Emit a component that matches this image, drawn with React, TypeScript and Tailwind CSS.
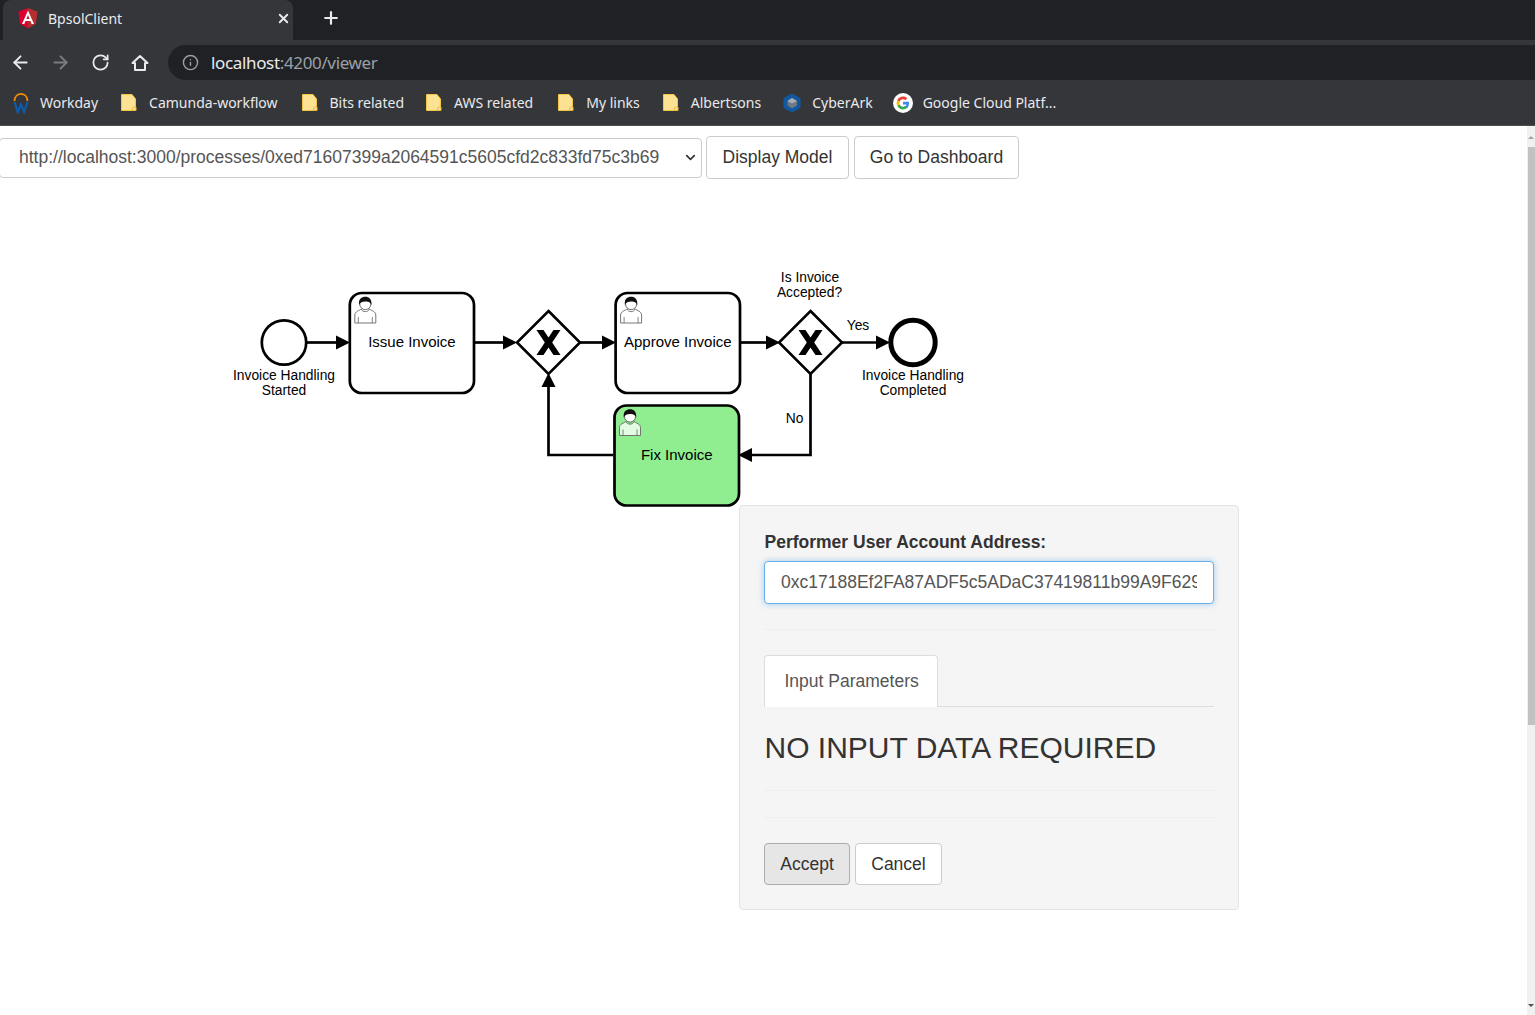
import { ArrowLeft, ArrowRight, ChevronDown, Info, Plus, RotateCw, X } from 'lucide-react';

const pageFont = "font-['Liberation_Sans',Arial,sans-serif]";

function AngularLogo() {
  return (
    <svg width="20" height="21" viewBox="0 0 20 21" className="shrink-0">
      <path d="M10 0 L19.5 3.4 L18 15.8 L10 20.5 Z" fill="#b52e31" />
      <path d="M10 0 L0.5 3.4 L2 15.8 L10 20.5 Z" fill="#dd0031" />
      <path d="M10 2.6 L4 16 H6.3 L7.5 13 H12.5 L13.7 16 H16 Z M8.4 11 L10 7 L11.6 11 Z" fill="#fff" fillRule="evenodd" />
    </svg>
  );
}

function WorkdayIcon() {
  return (
    <svg width="16" height="22" viewBox="0 0 16 22" className="shrink-0">
      <path d="M1.5 9 C2 -0.5 14 -0.5 14.5 9" fill="none" stroke="#f38b00" strokeWidth="1.8" />
      <path d="M1.5 10 L4.8 20 L8 12.5 L11.2 20 L14.5 10" fill="none" stroke="#0b5cad" strokeWidth="2.2" />
    </svg>
  );
}

function FolderIcon() {
  return (
    <svg width="16" height="19" viewBox="0 0 16 19" className="shrink-0">
      <path d="M0.5 1.5 H11 L14.5 6 V17.5 H0.5 Z" fill="#fde293" stroke="#f5c645" />
      <path d="M12.5 14 H15 V17.5 H11.5 V15 Z" fill="#fde293" stroke="#e8b93c" />
    </svg>
  );
}

function CyberArkIcon() {
  return (
    <svg width="18" height="20" viewBox="0 0 18 20" className="shrink-0">
      <path d="M9 0.5 L17.5 5 V15 L9 19.5 L0.5 15 V5 Z" fill="#11589e" />
      <path d="M9 5 L14 8 V12.5 L9 15.5 L4.5 12.5 V8 Z" fill="#6d7a86" />
      <path d="M9 5 L14 8 L9 10.5 L4.5 8 Z" fill="#a7adb3" />
    </svg>
  );
}

function GoogleIcon() {
  return (
    <svg width="20" height="20" viewBox="0 0 20 20" className="shrink-0">
      <circle cx="10" cy="10" r="10" fill="#fff" />
      <path d="M16 10.2 c0 -.5 0 -1 -.1 -1.4 H10 v2.7 h3.4 c-.2 .9 -.7 1.6 -1.4 2 l2.2 1.7 c1.1 -1.1 1.8 -2.9 1.8 -5 z" fill="#4285f4" />
      <path d="M10 16.4 c1.7 0 3.1 -.6 4.2 -1.6 L12 13.1 c-.5 .4 -1.2 .6 -2 .6 -1.6 0 -2.9 -1 -3.4 -2.4 L4.3 13 c1.1 2 3.2 3.4 5.7 3.4 z" fill="#34a853" />
      <path d="M6.6 11.3 c-.3 -.8 -.3 -1.8 0 -2.6 L4.3 7 c-.9 1.8 -.9 4.2 0 6 z" fill="#fbbc05" />
      <path d="M10 6.3 c.9 0 1.7 .3 2.4 .9 l1.9 -1.9 C13.1 4.2 11.7 3.6 10 3.6 7.5 3.6 5.4 5 4.3 7 l2.3 1.7 C7.1 7.3 8.4 6.3 10 6.3 z" fill="#ea4335" />
    </svg>
  );
}

function Bookmark({ icon, label, className }: { icon: React.ReactNode; label: string; className: string }) {
  return (
    <div className={`flex items-center ${className}`}>
      {icon}
      <span className="text-[14px] text-[#e8eaed] whitespace-nowrap">{label}</span>
    </div>
  );
}

function BrowserChrome() {
  return (
    <header className="shrink-0 font-['Noto_Sans',sans-serif]">
      {/* tab strip */}
      <div className="flex h-10 items-center bg-[#202124] pl-[3px]">
        <div className="flex h-10 w-[290px] items-center rounded-t-lg bg-[#35363a] pb-[4px] pl-[15px] pr-[2px]">
          <AngularLogo />
          <span className="ml-[10px] flex-1 text-[14px] text-[#e8eaed]">BpsolClient</span>
          <X size={15} strokeWidth={3} className="text-[#e8eaed]" />
        </div>
        <Plus size={20} strokeWidth={2.6} className="mb-[4px] ml-[28px] text-[#e8eaed]" />
      </div>
      {/* toolbar */}
      <div className="flex h-10 items-end bg-[#35363a]">
        <div className="flex h-[35px] w-[168px] items-center pl-[10px]">
          <ArrowLeft size={21} strokeWidth={2.2} className="text-[#e8eaed]" />
          <ArrowRight size={21} strokeWidth={2.2} className="ml-[19px] text-[#7a7c80]" />
          <RotateCw size={19} strokeWidth={2.2} className="ml-[20px] text-[#e8eaed]" />
          <svg width="18" height="18" viewBox="0 0 18 18" className="ml-[21px]">
            <path d="M9 2 L1.5 9 H4 V16 H14 V9 H16.5 Z" fill="none" stroke="#e8eaed" strokeWidth="2" strokeLinejoin="round" />
          </svg>
        </div>
        <div className="flex h-[35px] flex-1 items-center rounded-l-full bg-[#202124] pl-[14px]">
          <Info size={17} strokeWidth={2} className="text-[#9aa0a6]" />
          <span className="ml-[12px] text-[17px] tracking-[-0.35px] text-[#e8eaed]">
            localhost<span className="text-[#9aa0a6]">:4200/viewer</span>
          </span>
        </div>
      </div>
      {/* bookmarks */}
      <div className="flex h-[46px] items-center border-b border-[#4d4e51] bg-[#35363a] pl-[13px]">
        <Bookmark className="gap-[11px]" icon={<WorkdayIcon />} label="Workday" />
        <Bookmark className="ml-[23px] gap-[12px]" icon={<FolderIcon />} label="Camunda-workflow" />
        <Bookmark className="ml-[24px] gap-[12px]" icon={<FolderIcon />} label="Bits related" />
        <Bookmark className="ml-[22px] gap-[12px]" icon={<FolderIcon />} label="AWS related" />
        <Bookmark className="ml-[25px] gap-[12px]" icon={<FolderIcon />} label="My links" />
        <Bookmark className="ml-[23px] gap-[12px]" icon={<FolderIcon />} label="Albertsons" />
        <Bookmark className="ml-[22px] gap-[11px]" icon={<CyberArkIcon />} label="CyberArk" />
        <Bookmark className="ml-[20px] gap-[10px]" icon={<GoogleIcon />} label="Google Cloud Platf..." />
      </div>
    </header>
  );
}

function UserIcon({ x, y }: { x: number; y: number }) {
  return (
    <g transform={`translate(${x} ${y})`}>
      <path
        d="M0.5 26 V18 C0.5 14.5 5 13.5 7 12 C8 15.5 14 15.5 15 12 C17 13.5 21.5 14.5 21.5 18 V26 Z"
        fill="#fff"
        fillOpacity="0.75"
        stroke="#666"
        strokeWidth="0.9"
      />
      <path d="M4 20 V26 M18 20 V26" stroke="#666" strokeWidth="0.8" />
      <circle cx="11" cy="7" r="5.6" fill="#fff" stroke="#444" strokeWidth="0.8" />
      <path d="M4.8 8 C4 1.5 7.5 -0.3 11 -0.3 C14.8 -0.3 17.6 2 17.2 8 C15.8 5 14 4.4 11 4.6 C8 4.6 6 5.2 4.8 8 Z" fill="#111" />
    </g>
  );
}

function Task({ x, y, w, h, label, active = false }: { x: number; y: number; w: number; h: number; label: string; active?: boolean }) {
  return (
    <g>
      <rect x={x} y={y} width={w} height={h} rx="12" fill={active ? '#90ee90' : '#fff'} stroke="#000" strokeWidth="2.7" />
      <UserIcon x={x + 4.5} y={y + 4} />
      <text x={x + w / 2} y={y + h / 2 + 4} textAnchor="middle" fontSize="15" fill="#000">{label}</text>
    </g>
  );
}

function Gateway({ cx, cy }: { cx: number; cy: number }) {
  return (
    <g transform={`translate(${cx} ${cy})`}>
      <path d="M0 -31.5 L31.5 0 L0 31.5 L-31.5 0 Z" fill="#fff" stroke="#000" strokeWidth="2.6" />
      <path d="M-12 -12.5 H-5 L0 -5 L5 -12.5 H12 L3.7 0 L12 12.5 H5 L0 5 L-5 12.5 H-12 L-3.7 0 Z" fill="#000" />
    </g>
  );
}

function Label({ x, y, children }: { x: number; y: number; children: string }) {
  return <text x={x} y={y} textAnchor="middle" fontSize="13.8" fill="#000">{children}</text>;
}

function ProcessDiagram() {
  return (
    <svg width="760" height="240" viewBox="225 265 760 240" className="ml-[225px] mt-[86px] block shrink-0 overflow-visible">
      <g fill="none" stroke="#000" strokeWidth="2.7">
        <path d="M307 342.5 H338" />
        <path d="M475 342.5 H505" />
        <path d="M580 342.5 H604" />
        <path d="M741 342.5 H768" />
        <path d="M842 342.5 H878" />
        <path d="M810.5 373 V455 H752" />
        <path d="M613 455 H548.5 V386" />
      </g>
      <g fill="#000">
        <path d="M350 342.5 L336 335.5 V349.5 Z" />
        <path d="M517 342.5 L503 335.5 V349.5 Z" />
        <path d="M616 342.5 L602 335.5 V349.5 Z" />
        <path d="M780 342.5 L766 335.5 V349.5 Z" />
        <path d="M890 342.5 L876 335.5 V349.5 Z" />
        <path d="M738 455 L752 448 V462 Z" />
        <path d="M548.5 373 L541.5 387 H555.5 Z" />
      </g>
      <circle cx="284" cy="342.5" r="22.2" fill="#fff" stroke="#000" strokeWidth="2.7" />
      <circle cx="913" cy="342.5" r="22.2" fill="#fff" stroke="#000" strokeWidth="5" />
      <Task x={349.8} y={293} w={124.2} h={100} label="Issue Invoice" />
      <Task x={615.6} y={293} w={124.4} h={100} label="Approve Invoice" />
      <Task x={614.5} y={405.5} w={124.5} h={100} label="Fix Invoice" active />
      <Gateway cx={548.5} cy={342.5} />
      <Gateway cx={810.5} cy={342.5} />
      <Label x={284} y={380}>Invoice Handling</Label>
      <Label x={284} y={395}>Started</Label>
      <Label x={810} y={282}>Is Invoice</Label>
      <Label x={809.5} y={297}>Accepted?</Label>
      <Label x={858} y={330}>Yes</Label>
      <Label x={794.5} y={423}>No</Label>
      <Label x={913} y={380}>Invoice Handling</Label>
      <Label x={913} y={395}>Completed</Label>
    </svg>
  );
}

function TaskPanel() {
  return (
    <section className="ml-[739px] w-[500px] shrink-0 rounded border border-[#e3e3e3] bg-[#f5f5f5] px-6 pt-[24px] pb-[24px]">
      <label className="ml-[0.5px] block text-[17.5px] font-bold leading-[24px] text-[#333]">Performer User Account Address:</label>
      <input
        readOnly
        defaultValue="0xc17188Ef2FA87ADF5c5ADaC37419811b99A9F6291d3c"
        className="mt-[7px] block h-[43px] w-full rounded-[4px] border border-[#66afe9] bg-white px-4 text-[17.5px] text-[#555] shadow-[0_0_6px_rgba(102,175,233,0.6)] outline-none"
      />
      <hr className="mt-[25px] border-[#eee]" />
      <div className="mt-[25px] border-b border-[#ddd]">
        <div className="-mb-px h-[52px] w-[174px] rounded-t-[4px] border border-b-0 border-[#ddd] bg-white pl-[19.5px] text-[17.5px] leading-[50px] text-[#555]">
          Input Parameters
        </div>
      </div>
      <h2 className="mt-[21px] ml-[0.5px] text-[30px] leading-[40px] font-normal text-[#333]">NO INPUT DATA REQUIRED</h2>
      <hr className="mt-[22px] border-[#eee]" />
      <hr className="mt-[26px] border-[#eee]" />
      <div className="mt-[25px] flex gap-[5px]">
        <button className="h-[42px] w-[86px] rounded-[4px] border border-[#adadad] bg-[#e6e6e6] text-[17.5px] text-[#333]">Accept</button>
        <button className="h-[42px] w-[87px] rounded-[4px] border border-[#ccc] bg-white text-[17.5px] text-[#333]">Cancel</button>
      </div>
    </section>
  );
}

export default function App() {
  return (
    <div className="flex h-[1015px] w-[1535px] flex-col overflow-hidden bg-white">
      <BrowserChrome />
      <main className={`relative flex flex-1 flex-col overflow-hidden ${pageFont}`}>
        <div className="mt-[10px] flex shrink-0 items-center gap-[4px]">
          <div className="relative -ml-[1px] w-[703px]">
            <select
              defaultValue="a"
              className="block h-[40px] w-full appearance-none rounded-[4px] border border-[#ccc] bg-white pb-[1px] pl-[19px] pr-[30px] text-[17.5px] text-[#555]"
            >
              <option value="a">http://localhost:3000/processes/0xed71607399a2064591c5605cfd2c833fd75c3b69</option>
            </select>
            <ChevronDown size={15} strokeWidth={2.6} className="pointer-events-none absolute top-[12px] right-[4px] text-[#333]" />
          </div>
          <button className="h-[43px] w-[143px] rounded-[4px] border border-[#ccc] bg-white text-[17.5px] text-[#333]">Display Model</button>
          <button className="ml-px h-[43px] w-[165px] rounded-[4px] border border-[#ccc] bg-white text-[17.5px] text-[#333]">Go to Dashboard</button>
        </div>
        <ProcessDiagram />
        <TaskPanel />
        {/* page scrollbar */}
        <div className="absolute top-0 right-0 bottom-0 flex w-[8px] flex-col items-end bg-[#f1f1f1]">
          <div className="mt-[10px] mr-px h-0 w-0 border-x-[3px] border-b-[3px] border-x-transparent border-b-[#a3a3a3]" />
          <div className="mt-[8px] h-[578px] w-[7px] bg-[#c1c1c1]" />
          <div className="mt-auto mr-px mb-[8px] h-0 w-0 border-x-[3px] border-t-[3px] border-x-transparent border-t-[#505050]" />
        </div>
      </main>
    </div>
  );
}
